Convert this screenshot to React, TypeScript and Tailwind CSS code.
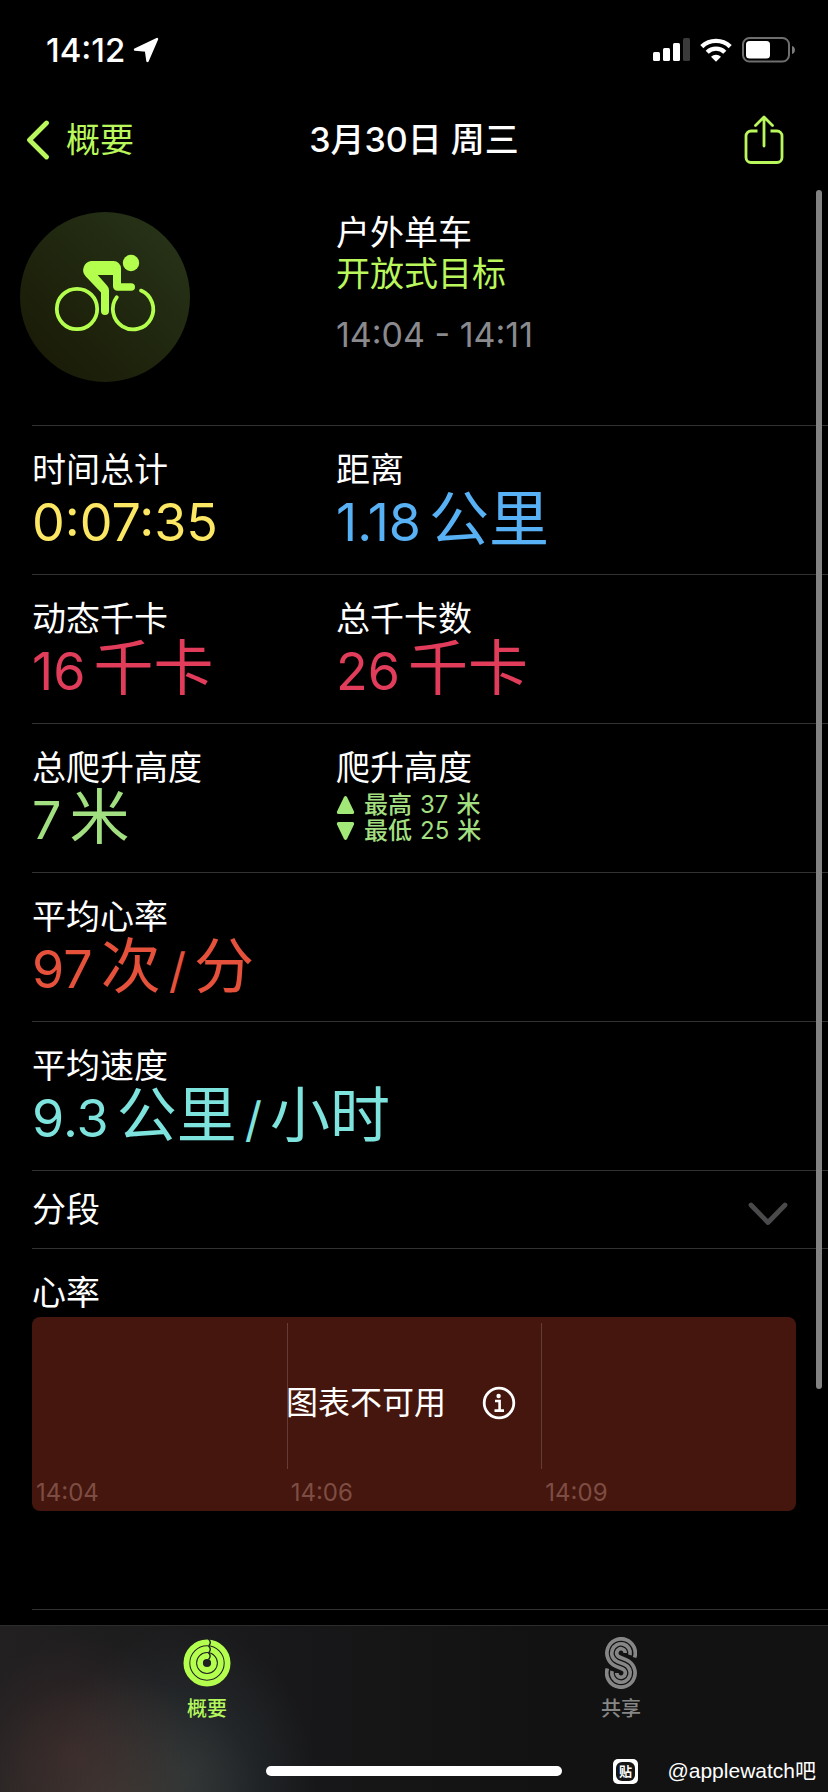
import type { ReactNode } from "react";

function LocationArrow() {
  return (
    <svg width="26" height="26" viewBox="0 0 26 26" fill="white" stroke="white" strokeWidth="2.4" strokeLinejoin="round">
      <path d="M2 12.500 L24 2 L14.500 24 L13 13.500 Z" />
    </svg>
  );
}

function StatusIcons() {
  return (
    <div className="flex items-center gap-[10px]">
      <svg width="37" height="24" viewBox="0 0 37 24" fill="white">
        <rect x="0" y="14" width="7" height="9" rx="1.5" />
        <rect x="10" y="10" width="7" height="13" rx="1.5" />
        <rect x="20" y="5" width="7" height="18" rx="1.5" />
        <rect x="30" y="0" width="7" height="23" rx="1.5" fill="#3a3a3a" />
      </svg>
      <svg width="32" height="24" viewBox="0 0 32 24" fill="none" stroke="white" strokeWidth="4.4">
        <path d="M1.8 8.6 A20.5 20.5 0 0 1 30.2 8.6" />
        <path d="M7.2 14.2 A12.6 12.6 0 0 1 24.8 14.2" />
        <path d="M16 23.8 L11 18.8 A7.2 7.2 0 0 1 21 18.8 Z" fill="white" stroke="none" />
      </svg>
      <svg width="54" height="26" viewBox="0 0 54 26">
        <rect x="1" y="1" width="46" height="23.5" rx="6.5" fill="none" stroke="#6e6e6e" strokeWidth="2" />
        <rect x="4" y="4" width="24" height="17.5" rx="3.5" fill="white" />
        <path d="M50 9 a4.2 4.2 0 0 1 0 8 Z" fill="#7a7a7a" />
      </svg>
    </div>
  );
}

function ShareIcon() {
  return (
    <svg width="40" height="50" viewBox="0 0 40 50" fill="none" stroke="#baf75c" strokeWidth="2.8" strokeLinecap="round" strokeLinejoin="round">
      <path d="M13.5 16 H7 a5 5 0 0 0 -5 5 V42.5 a5 5 0 0 0 5 5 H33 a5 5 0 0 0 5 -5 V21 a5 5 0 0 0 -5 -5 H26.5" strokeLinecap="butt" />
      <path d="M20 31 V2.5 M11.5 10.5 L20 2 L28.5 10.5" />
    </svg>
  );
}

function CyclingIcon() {
  return (
    <svg width="170" height="170" viewBox="0 0 170 170" fill="none" stroke="#b4ff4e" strokeLinecap="round" strokeLinejoin="round">
      <circle cx="57" cy="97" r="20.2" strokeWidth="3.8" />
      <path d="M96.8 85.2 A20.2 20.2 0 1 0 121 78.6" strokeWidth="3.8" />
      <circle cx="111" cy="51" r="8.2" fill="#b4ff4e" stroke="none" />
      <path
        d="M71 49 H93.500 a7.500 7.500 0 0 1 7.500 7.500 V71.200 H111.200 a3.700 3.700 0 0 1 0 7.600 H97.500 a4.500 4.500 0 0 1 -4.500 -4.500 V63 H77.700 L87.200 73.700 a7 7 0 0 1 1.800 4.600 V99 a4 4 0 0 1 -8 0 V80.500 L65.800 64.500 A9.200 9.200 0 0 1 71 49 Z"
        fill="#b4ff4e"
        stroke="none"
      />
    </svg>
  );
}

function RingsIcon() {
  return (
    <svg width="48" height="48" viewBox="0 0 48 48" fill="none">
      <g stroke="#b4ff4e" strokeWidth="5.8">
        <circle cx="24" cy="24" r="20.6" />
        <circle cx="24" cy="24" r="13.8" />
        <circle cx="24" cy="24" r="7" />
      </g>
      <g stroke="#151a1c" strokeWidth="1.3">
        <path d="M25.500 0 Q28.800 3.200 26 6.500" />
        <path d="M25.500 7 Q28.800 10.100 26 13.300" />
        <path d="M25.500 13.800 Q28.800 17 25.500 20.500" />
      </g>
    </svg>
  );
}

function SharingIcon() {
  return (
    <svg width="32" height="52" viewBox="0 0 32 52" fill="none" stroke="#868686" strokeWidth="3.7">
      <path d="M29.600 20.500 A14.200 14.200 0 1 0 10.600 29.100 L17.600 32 A4.300 4.300 0 1 1 11.700 36" />
      <path d="M25 18 A9.250 9.250 0 1 0 12.500 24.600 L19.500 27.400 A9.250 9.250 0 1 1 7 34" />
      <path d="M20.300 16 A4.300 4.300 0 1 0 14.400 20 L21.400 22.900 A14.200 14.200 0 1 1 2.400 31.500" />
    </svg>
  );
}

function Row({ children }: { children: ReactNode }) {
  return (
    <section className="grid grid-cols-[304px_1fr] border-t border-[#323234] py-6">
      {children}
    </section>
  );
}

function Label({ children }: { children: ReactNode }) {
  return <h2 className="h-10 text-[34px] leading-10">{children}</h2>;
}

type StatProps = {
  label: string;
  value: string;
  unit?: string;
  per?: string;
  color: string;
};

function Stat({ label, value, unit, per, color }: StatProps) {
  return (
    <div>
      <Label>{label}</Label>
      <p className={`h-[60px] space-x-2 whitespace-nowrap text-[60px] leading-[58px] ${color}`}>
        <span className="text-[52px]">{value}</span>
        {unit && <span>{unit}</span>}
        {per && <span className="text-[48px]">/</span>}
        {per && <span>{per}</span>}
      </p>
    </div>
  );
}

const chartTimes = ["14:04", "14:06", "14:09"];

function HeartRateChart() {
  return (
    <div className="relative mr-8 grid h-[194px] grid-cols-3 rounded-lg bg-[#45160d]">
      {chartTimes.map((time, i) => (
        <div key={time} className="flex flex-col pt-[6px]">
          <div className={`h-[146px] ${i > 0 ? "border-l border-[#653c34]" : ""}`} />
          <span className="pt-1 pl-1 text-[24px] leading-10 text-[#7d4d44]">{time}</span>
        </div>
      ))}
      {/* message laid over the empty plot */}
      <div className="absolute inset-x-0 top-[65px] flex items-center justify-center gap-9 pr-[26px] text-[32px] leading-[42px]">
        <span>图表不可用</span>
        <button aria-label="更多信息">
          <svg width="34" height="34" viewBox="0 0 34 34" fill="none" stroke="white" strokeWidth="2.8">
            <circle cx="17" cy="17" r="14.800" />
            <circle cx="16.600" cy="10" r="2.200" fill="white" stroke="none" />
            <path d="M13 15 H17.600 V24.500 M12.500 24.600 H22" strokeWidth="2.600" />
          </svg>
        </button>
      </div>
    </div>
  );
}

function App() {
  return (
    <div className="relative flex min-h-screen flex-col bg-black font-[Inter,'Noto_Sans_CJK_SC',sans-serif] text-white">
      <div className="flex h-[99px] items-center justify-between pr-[32px] pl-[46px]">
        <div className="flex items-center gap-2 text-[33px] leading-10 font-medium">
          14:12
          <LocationArrow />
        </div>
        <StatusIcons />
      </div>

      <header className="grid h-[82px] grid-cols-[1fr_auto_1fr] items-center px-[26px]">
        <button className="flex items-center gap-4 justify-self-start text-[34px] leading-10 text-[#baf75c]">
          <svg width="24" height="40" viewBox="0 0 24 40" fill="none" stroke="#baf75c" strokeWidth="4.8" strokeLinecap="round" strokeLinejoin="round">
            <path d="M20.500 3 L3.500 20 L20.500 37" />
          </svg>
          概要
        </button>
        <h1 className="text-[34px] leading-10 font-medium">3月30日 周三</h1>
        <button aria-label="共享体能训练" className="mr-[18px] justify-self-end">
          <ShareIcon />
        </button>
      </header>

      <main className="flex-1">
        <div className="grid h-[244px] grid-cols-[316px_1fr] pt-[31px] pl-5">
          <div className="h-[170px] w-[170px] rounded-full bg-linear-to-tr from-[#181805] to-[#28361a]">
            <CyclingIcon />
          </div>
          <div className="text-[34px] leading-[41px]">
            <p>户外单车</p>
            <p className="text-[#baf75c]">开放式目标</p>
            <p className="mt-5 text-[#8a8a8e]">14:04 - 14:11</p>
          </div>
        </div>

        <div className="ml-8">
          <Row>
            <Stat label="时间总计" value="0:07:35" color="text-[#fbe763]" />
            <Stat label="距离" value="1.18" unit="公里" color="text-[#57b1f4]" />
          </Row>
          <Row>
            <Stat label="动态千卡" value="16" unit="千卡" color="text-[#e23c5b]" />
            <Stat label="总千卡数" value="26" unit="千卡" color="text-[#e23c5b]" />
          </Row>
          <Row>
            <Stat label="总爬升高度" value="7" unit="米" color="text-[#a2df81]" />
            <div>
              <Label>爬升高度</Label>
              <ul className="pt-1 text-[24px] leading-[26px] font-medium text-[#a2df81]">
                <li className="flex items-center gap-2">
                  <svg width="20" height="20" viewBox="0 0 20 20" fill="#a2e878">
                    <path d="M8 2 Q9.500 0 11 2 L18 16.500 Q18.500 19 16.500 19 H2.500 Q.5 19 1 16.500 Z" />
                  </svg>
                  <span>最高</span>
                  <span className="font-normal">37</span>
                  <span>米</span>
                </li>
                <li className="flex items-center gap-2">
                  <svg width="20" height="20" viewBox="0 0 20 20" fill="#a2e878">
                    <path d="M8 18 Q9.500 20 11 18 L18 3.500 Q18.500 1 16.500 1 H2.500 Q.5 1 1 3.500 Z" />
                  </svg>
                  <span>最低</span>
                  <span className="font-normal">25</span>
                  <span>米</span>
                </li>
              </ul>
            </div>
          </Row>
          <Row>
            <Stat label="平均心率" value="97" unit="次" per="分" color="text-[#e5513a]" />
          </Row>
          <Row>
            <Stat label="平均速度" value="9.3" unit="公里" per="小时" color="text-[#7ee3dd]" />
          </Row>

          <button className="flex h-[78px] w-full items-center justify-between border-t border-[#323234] pr-10 text-[34px] leading-10">
            分段
            <svg width="40" height="24" viewBox="0 0 40 24" className="mt-2" fill="none" stroke="#4a4a4d" strokeWidth="4.8" strokeLinecap="round" strokeLinejoin="round">
              <path d="M3 3 L20 20.500 L37 3" />
            </svg>
          </button>

          <section className="border-t border-[#323234] pt-6 pb-[98px]">
            <div className="mb-1">
              <Label>心率</Label>
            </div>
            <HeartRateChart />
          </section>
          <div className="h-4 border-t border-[#323234]" />
        </div>
      </main>

      <footer className="flex h-[167px] flex-col border-t border-[#2c2c2c] bg-[#131313] bg-[radial-gradient(ellipse_110px_120px_at_75px_130px,#4a303080,transparent),radial-gradient(ellipse_150px_130px_at_110px_180px,#4a443a90,transparent),radial-gradient(ellipse_130px_150px_at_185px_150px,#36444890,transparent),linear-gradient(to_right,#222021,#18181a_35%,#121212_65%)]">
        <nav className="grid h-[98px] grid-cols-2 text-[20px] leading-6 font-medium">
          <button className="flex flex-col items-center pt-[11px] text-[#b4f75c]">
            <span className="flex h-[52px] items-center">
              <RingsIcon />
            </span>
            <span className="mt-2">概要</span>
          </button>
          <button className="flex flex-col items-center pt-[11px] text-[#868686]">
            <SharingIcon />
            <span className="mt-2">共享</span>
          </button>
        </nav>
        <div className="grid grid-cols-[1fr_296px_1fr] items-center pt-[33px]">
          <div className="col-start-2 h-[10px] rounded-full bg-white" />
          <div className="flex items-center justify-between pr-3 pl-[51px]">
            <span className="flex h-[25px] w-[25px] items-center justify-center rounded-[5px] bg-white">
              <span className="flex h-[19px] w-[19px] items-center justify-center rounded-[6px] bg-[#151515] text-[13px] leading-none font-bold">
                贴
              </span>
            </span>
            <span className="font-['Liberation_Sans','Noto_Sans_CJK_SC',sans-serif] text-[21px] leading-[28px]">
              @applewatch吧
            </span>
          </div>
        </div>
      </footer>

      {/* Scroll indicator */}
      <div className="absolute top-[190px] right-[6px] h-[1199px] w-[6px] rounded-full bg-[#828282]" />
    </div>
  );
}

export default App;
